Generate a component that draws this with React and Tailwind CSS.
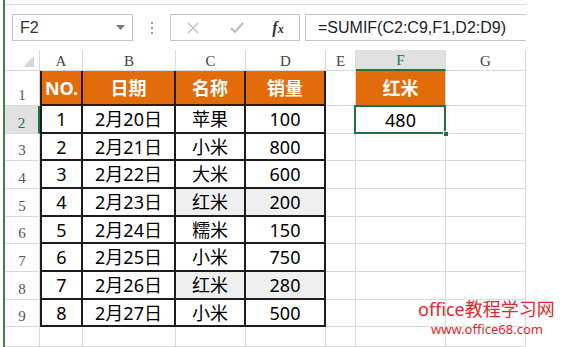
import React from "react";

const rows = [
  [1, "2月20日", "苹果", 100],
  [2, "2月21日", "小米", 800],
  [3, "2月22日", "大米", 600],
  [4, "2月23日", "红米", 200],
  [5, "2月24日", "糯米", 150],
  [6, "2月25日", "小米", 750],
  [7, "2月26日", "红米", 280],
  [8, "2月27日", "小米", 500],
];

const cellFont = { fontFamily: '"Noto Sans", "Noto Sans CJK SC", sans-serif' };
const serif = { fontFamily: '"Liberation Serif", serif' };

function RowHead({ n, active }) {
  return (
    <div
      className={
        "flex items-end justify-center pb-[2px] text-[15px] leading-none border-b border-[#dadada] " +
        (active
          ? "bg-[#e1e1e1] text-[#217346] border-r-2 border-r-[#217346]"
          : "text-[#555] border-r border-r-[#dadada]")
      }
      style={serif}
    >
      {n}
    </div>
  );
}

function TCell({ children, first, hl }) {
  return (
    <div
      className={
        "flex items-center justify-center text-[18px] leading-none text-black border-r-2 border-b-2 border-[#1c1c1c] " +
        (first ? "border-l-2 " : "") +
        (hl ? "bg-[#efefef]" : "bg-white")
      }
      style={cellFont}
    >
      {children}
    </div>
  );
}

function HCell({ children, first }) {
  return (
    <div
      className={
        "flex items-center justify-center text-[18px] leading-none font-bold text-white bg-[#e36c0a] border-r-2 border-b-2 border-[#2a1a10] " +
        (first ? "border-l-2" : "")
      }
      style={cellFont}
    >
      {children}
    </div>
  );
}

function GCell({ children, className = "" }) {
  return (
    <div className={"border-r border-b border-[#dadada] " + className}>{children}</div>
  );
}

export default function App() {
  return (
    <div className="w-[574px] h-[347px] bg-white relative overflow-hidden flex">
      <div className="w-[3px] shrink-0" />
      <div className="w-[2px] shrink-0 bg-[#3f8153]" />
      <div className="flex-1 flex flex-col">
        <div className="h-[5px]" />
        <div className="w-[521px] h-px bg-[#dcdcdc]" />
        <div className="h-[12px]" />
        {/* toolbar */}
        <div className="flex h-[34px] items-stretch">
          <div className="w-[7px]" />
          <div className="w-[121px] border border-[#c6c6c6] flex items-center justify-between pl-[7px] pr-[7px]">
            <span className="text-[16px] text-[#333]" style={{ fontFamily: '"Liberation Sans", sans-serif' }}>
              F2
            </span>
            <svg width="9" height="5" viewBox="0 0 9 5">
              <path d="M0 0 L9 0 L4.5 5 Z" fill="#777" />
            </svg>
          </div>
          <div className="w-[37px] flex flex-col items-center justify-center gap-[3px]">
            <div className="w-[2px] h-[2px] bg-[#9a9a9a]" />
            <div className="w-[2px] h-[2px] bg-[#9a9a9a]" />
            <div className="w-[2px] h-[2px] bg-[#9a9a9a]" />
          </div>
          <div className="w-[130px] border border-[#c6c6c6] flex items-center">
            <div className="w-[44px] flex justify-center">
              <svg width="12" height="12" viewBox="0 0 12 12">
                <path d="M1 1 L11 11 M11 1 L1 11" stroke="#bdbdbd" strokeWidth="1.4" />
              </svg>
            </div>
            <div className="w-[44px] flex justify-center">
              <svg width="14" height="12" viewBox="0 0 14 12">
                <path d="M1 6 L5 10 L13 1" stroke="#bdbdbd" strokeWidth="2" fill="none" />
              </svg>
            </div>
            <div className="flex-1 flex justify-center pr-[2px]">
              <span className="italic text-[16px] text-[#333] font-bold" style={serif}>
                f<span className="text-[12px]">x</span>
              </span>
            </div>
          </div>
          <div className="w-[5px]" />
          <div className="w-[221px] border-t border-b border-l border-[#c6c6c6] flex items-center pl-[12px]">
            <span className="text-[16px] text-[#222]" style={{ fontFamily: '"Liberation Sans", sans-serif' }}>
              =SUMIF(C2:C9,F1,D2:D9)
            </span>
          </div>
        </div>
        <div className="h-[11px]" />
        {/* grid */}
        <div className="grid w-[521px] grid-cols-[35px_43px_93px_70px_80px_30px_90px_80px] grid-rows-[21px_35px_28px_27px_28px_28px_27px_28px_28px_27px_20px]">
          {/* column headers */}
          <div className="border-r border-b border-[#dadada] flex items-end justify-end pr-[5px] pb-[3px]">
            <svg width="11" height="11" viewBox="0 0 11 11">
              <path d="M11 0 L11 11 L0 11 Z" fill="#d6d6d6" />
            </svg>
          </div>
          {["A", "B", "C", "D", "E"].map((l) => (
            <div
              key={l}
              className="border-r border-b border-[#dadada] flex items-end justify-center pb-[1px] text-[15px] leading-none text-[#444]"
              style={serif}
            >
              {l}
            </div>
          ))}
          <div
            className="bg-[#e1e1e1] border-r border-r-[#dadada] border-b-2 border-b-[#217346] flex items-end justify-center pb-[1px] text-[15px] leading-none text-[#217346]"
            style={serif}
          >
            F
          </div>
          <div
            className="border-r border-b border-[#dadada] flex items-end justify-center pb-[1px] text-[15px] leading-none text-[#444]"
            style={serif}
          >
            G
          </div>

          {/* row 1 */}
          <RowHead n={1} />
          <HCell first>NO.</HCell>
          <HCell>日期</HCell>
          <HCell>名称</HCell>
          <HCell>销量</HCell>
          <GCell />
          <div
            className="flex items-center justify-center text-[18px] leading-none font-bold text-white bg-[#e36c0a] border-r border-b border-[#dadada]"
            style={cellFont}
          >
            红米
          </div>
          <GCell />

          {rows.map((r, i) => {
            const hl = i === 3 || i === 6;
            return (
              <React.Fragment key={i}>
                <RowHead n={i + 2} active={i === 0} />
                <TCell first>{r[0]}</TCell>
                <TCell>{r[1]}</TCell>
                <TCell hl={hl}>{r[2]}</TCell>
                <TCell hl={hl}>{r[3]}</TCell>
                <GCell />
                {i === 0 ? (
                  <div
                    className="relative flex items-center justify-center text-[18px] leading-none text-black border-r border-b border-[#dadada]"
                    style={cellFont}
                  >
                    480
                    <div className="absolute -top-[1px] -left-[2px] -right-[1px] -bottom-[1px] border-2 border-[#217346]" />
                    <div className="absolute -right-[4px] -bottom-[4px] w-[6px] h-[6px] bg-[#217346] border border-white" />
                  </div>
                ) : (
                  <GCell />
                )}
                <GCell />
              </React.Fragment>
            );
          })}

          {/* partial last row */}
          <RowHead n="" />
          <GCell />
          <GCell />
          <GCell />
          <GCell />
          <GCell />
          <GCell />
          <GCell />
        </div>
      </div>

      {/* watermark */}
      <div
        className="absolute left-[418px] top-[300px] text-[18px] leading-none text-[#e5262b]"
        style={cellFont}
      >
        office教程学习网
      </div>
      <div
        className="absolute left-[431px] top-[323px] text-[13px] leading-none text-[#e5262b]"
        style={cellFont}
      >
        www.office68.com
      </div>
    </div>
  );
}
